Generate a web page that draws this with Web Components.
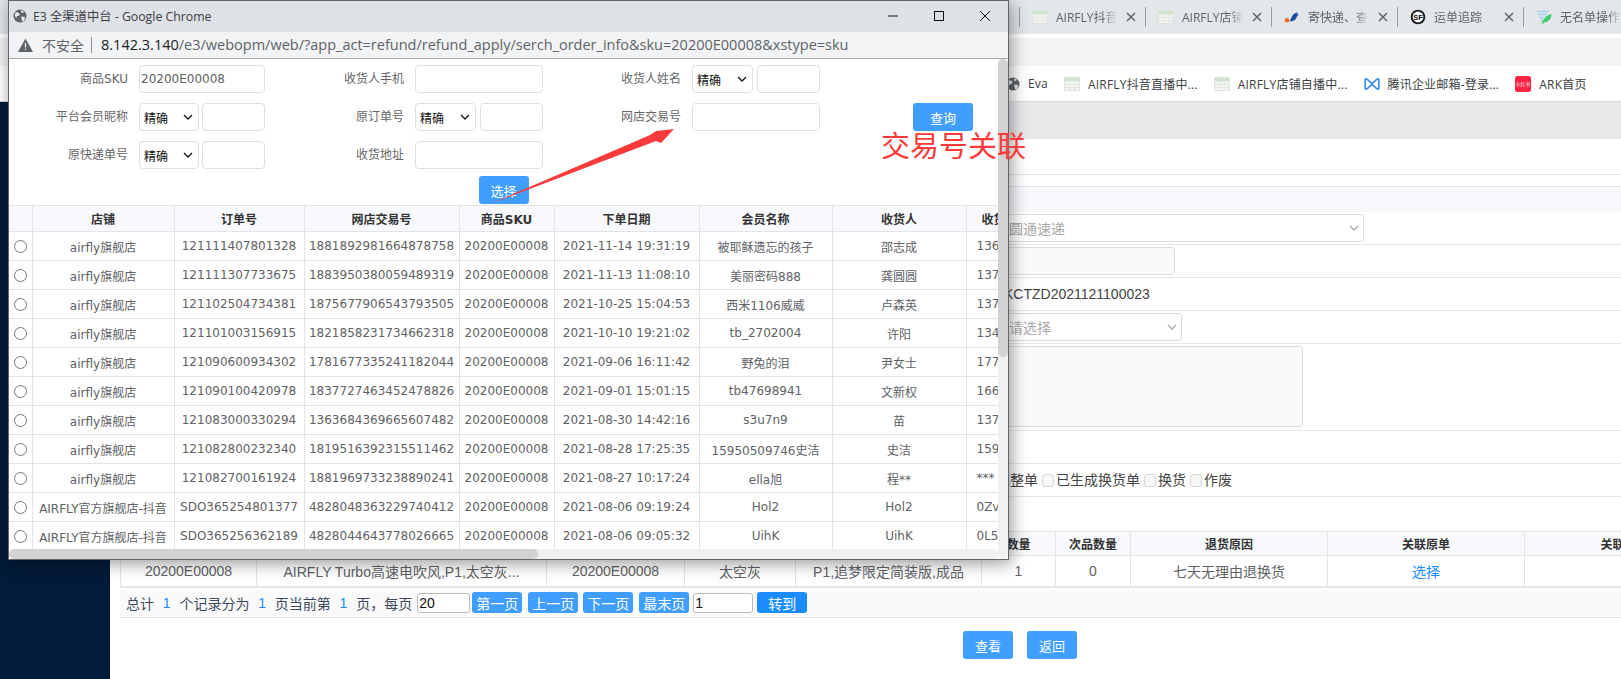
<!DOCTYPE html>
<html lang="zh-CN">
<head>
<meta charset="utf-8">
<title>E3 全渠道中台</title>
<style>
html,body{margin:0;padding:0;width:1621px;height:679px;overflow:hidden;background:#fff;font-family:"Liberation Sans","Noto Sans CJK SC",sans-serif}
</style>
</head>
<body>
<desk-app></desk-app>
<script>
const CJK='"Noto Sans CJK SC"';
function def(name,css,html,init){
  customElements.define(name,class extends HTMLElement{
    constructor(){super();const r=this.attachShadow({mode:'open'});
      r.innerHTML='<style>'+css+'</style>'+(typeof html==='function'?'':html);}
    connectedCallback(){
      if(typeof html==='function'){const r=this.shadowRoot;const st=r.querySelector('style').outerHTML;r.innerHTML=st+html(this);}
      if(init)init.call(this,this.shadowRoot);
    }
  });
}
const ICON={
 sheet:'<svg width="16" height="16" viewBox="0 0 16 16"><rect x=".5" y="1.5" width="15" height="13" fill="#f4f6f3" stroke="#dfe3dd"/><rect x="1" y="2" width="14" height="3.5" fill="#cfe3cf"/><path d="M1 8.5h14M1 11.5h14M6 5.5v9M11 5.5v9" stroke="#e3e6e1" fill="none"/></svg>',
 globe:'<svg width="14" height="14" viewBox="0 0 14 14"><circle cx="7" cy="7" r="6.5" fill="#5f6368"/><path d="M2.5 3.2l2.6.4 1.7 1.5-.9 1.7-1.9.3-.6 2-1.6-2.3zM8 1.4l2.7.8-.4 1.6-1.9.3zM8.4 7.4l2.8.3 1 1.2-1.6 3-1.5.2-.7-2.7z" fill="#e8eaed"/></svg>',
 bird:'<svg width="16" height="16" viewBox="0 0 16 16"><path d="M4.5 12.5C7 12 7 7.5 9.6 5.2 10.6 4.3 12.300 3.500 14 3.200l-1.300 2 2.300-.2-2 2.200c-.7 2.600-2.200 4.400-4.500 4.800-1.500.3-3 .600-4.500.500z" fill="#1d4f9c"/><circle cx="2.900" cy="11.200" r="2.300" fill="#f26b1d"/></svg>',
 sf:'<svg width="16" height="16" viewBox="0 0 16 16"><circle cx="8" cy="8" r="7.300" fill="#1b1b1b"/><circle cx="8" cy="8" r="5.400" fill="#fff"/><text x="8" y="10.700" text-anchor="middle" font-family="Liberation Sans" font-weight="700" font-size="7.500" fill="#111">SF</text></svg>',
 note:'<svg width="16" height="16" viewBox="0 0 16 16"><path d="M1 2.500h12M2 5.500h9M3 8.500h5M4 11.500h3" stroke="#a9d2ec" stroke-width="1.500" fill="none"/><path d="M5.500 15.500C7 10 10 6.500 15.500 5c0 4.500-2.500 7.800-7 8.200z" fill="#3ecb6c"/></svg>',
 mail:'<svg width="16" height="16" viewBox="0 0 16 16"><path d="M1.200 3.200v9.600h1.800L8 8.400 13 12.800h1.800V3.200H13L8 7.600 3 3.200z" fill="none" stroke="#3d8fe8" stroke-width="1.700" stroke-linejoin="round"/></svg>',
 ark:'<svg width="16" height="16" viewBox="0 0 16 16"><rect width="16" height="16" rx="2.500" fill="#ff2442"/><text x="8" y="10" text-anchor="middle" font-family="Noto Sans CJK SC" font-size="4.800" fill="#fff">小红书</text></svg>',
 chev:'<svg width="10" height="6" viewBox="0 0 10 6"><path d="M1 1l4 4 4-4" fill="none" stroke="currentColor" stroke-width="1.300"/></svg>'
};

def('ui-btn',`:host{display:inline-flex;align-items:center;justify-content:center;background:var(--btn,#409eff);color:#fff;border-radius:3px;font:var(--bfs,13px) ${CJK},sans-serif;box-sizing:border-box;width:var(--w,50px);height:var(--h,28px);flex:none}`,'<slot></slot>');

def('ui-input',`:host{display:block;box-sizing:border-box;border:1px solid #dcdfe6;border-radius:4px;height:28px;background:#fff;font:12px "DejaVu Sans",${CJK},sans-serif;color:#606266;line-height:26px;padding-left:1px;flex:1 1 auto;min-width:0}`,'<slot></slot>');

def('ui-select',`:host{display:flex;align-items:center;justify-content:space-between;box-sizing:border-box;border:1px solid #dcdfe6;border-radius:4px;height:28px;background:#fff;font:12px ${CJK},sans-serif;color:#111;padding:0 5px 0 4px;flex:none}`,'<slot></slot>'+ICON.chev);

def('ctl-pair',`:host{display:flex;gap:var(--g,3px);align-items:stretch}ui-select{width:var(--sw,60px)}`,
  '<ui-select>精确</ui-select><ui-input></ui-input>');

def('form-label',`:host{display:block;text-align:right;font:12px "DejaVu Sans",${CJK},sans-serif;color:#666;line-height:28px;white-space:nowrap;padding-right:1px}`,'<slot></slot>');

def('search-form',`:host{display:block;padding-top:6px}
 .g{display:grid;grid-template-columns:120px 126px 130px 128px 129px 128px 60px;grid-auto-rows:28px;column-gap:10px;row-gap:10px}
 .q{margin-left:83px}
 .w{--g:4px;--sw:61px}
 .act{display:flex;justify-content:center;margin-top:7px;padding-bottom:1px}`,
 `<div class="g">
 <form-label>商品SKU</form-label><ui-input>20200E00008</ui-input>
 <form-label>收货人手机</form-label><ui-input></ui-input>
 <form-label>收货人姓名</form-label><ctl-pair class="w"></ctl-pair><span></span>
 <form-label>平台会员昵称</form-label><ctl-pair></ctl-pair>
 <form-label>原订单号</form-label><ctl-pair class="w"></ctl-pair>
 <form-label>网店交易号</form-label><ui-input></ui-input><ui-btn class="q" style="--w:60px">查询</ui-btn>
 <form-label>原快递单号</form-label><ctl-pair></ctl-pair>
 <form-label>收货地址</form-label><ui-input></ui-input>
 </div>
 <div class="act"><ui-btn>选择</ui-btn></div>`);

const ORDERS=[
['airfly旗舰店','121111407801328','1881892981664878758','2021-11-14 19:31:19','被耶稣遗忘的孩子','邵志成','136'],
['airfly旗舰店','121111307733675','1883950380059489319','2021-11-13 11:08:10','美丽密码888','龚圆圆','137'],
['airfly旗舰店','121102504734381','1875677906543793505','2021-10-25 15:04:53','西米1106威威','卢森英','137'],
['airfly旗舰店','121101003156915','1821858231734662318','2021-10-10 19:21:02','tb_2702004','许阳','134'],
['airfly旗舰店','121090600934302','1781677335241182044','2021-09-06 16:11:42','野兔的泪','尹女士','177'],
['airfly旗舰店','121090100420978','1837727463452478826','2021-09-01 15:01:15','tb47698941','文新权','166'],
['airfly旗舰店','121083000330294','1363684369665607482','2021-08-30 14:42:16','s3u7n9','苗','137'],
['airfly旗舰店','121082800232340','1819516392315511462','2021-08-28 17:25:35','15950509746史洁','史洁','159'],
['airfly旗舰店','121082700161924','1881969733238890241','2021-08-27 10:17:24','ella旭','程**','***'],
['AIRFLY官方旗舰店-抖音','SDO365254801377','4828048363229740412','2021-08-06 09:19:24','Hol2','Hol2','0Zv'],
['AIRFLY官方旗舰店-抖音','SDO365256362189','4828044643778026665','2021-08-06 09:05:32','UihK','UihK','0L5']];

def('order-table',`:host{display:block;width:1098px}
 table{border-collapse:collapse;table-layout:fixed;width:1062px;font:12px "DejaVu Sans",${CJK},sans-serif;color:#606266}
 th,td{border:1px solid #e4e4e4;text-align:center;white-space:nowrap;overflow:hidden;padding:0;box-sizing:border-box}
 th{height:26px;background:#f7f9fc;color:#333;font-weight:700}
 td{height:29px}
 td:first-child,th:first-child{border-left:0}
 input{margin:3px 0 0 0;width:13px;height:13px;accent-color:#777}
 .l{text-align:left;padding-left:10px}
 th.l{padding-left:15px}`,
 ()=>`<table><colgroup><col style="width:23px"><col style="width:142px"><col style="width:130px"><col style="width:155px"><col style="width:95px"><col style="width:145px"><col style="width:133px"><col style="width:134px"><col style="width:105px"></colgroup>
 <tr><th></th><th>店铺</th><th>订单号</th><th>网店交易号</th><th>商品SKU</th><th>下单日期</th><th>会员名称</th><th>收货人</th><th class="l">收货人手机</th></tr>
 ${ORDERS.map(o=>`<tr><td><input type="radio" name="o"></td><td>${o[0]}</td><td>${o[1]}</td><td>${o[2]}</td><td>20200E00008</td><td>${o[3]}</td><td>${o[4]}</td><td>${o[5]}</td><td class="l">${o[6]}</td></tr>`).join('')}
 </table>`);

def('win-scrollbar',`:host{display:block;background:#f1f1f1;flex:none;border-radius:5px}
 i{display:block;background:#d2d2d2;border-radius:5px}
 :host([dir-h]) {height:10px}
 :host([dir-h]) i{height:10px;width:529px}
 :host([dir-v]) {width:10px}
 :host([dir-v]) i{width:10px;height:298px}`,'<i></i>');

def('popup-window',`:host{position:absolute;left:8px;top:0;width:1001px;height:560px;box-sizing:border-box;border:1px solid #62666b;background:#fff;box-shadow:2px 3px 16px rgba(0,0,0,.42);display:flex;flex-direction:column;z-index:2}
 .tb{height:31px;flex:none;background:#dee1e6;display:flex;align-items:center;box-sizing:border-box;font:12.300px "Open Sans",${CJK},sans-serif;color:#3c4043;padding:0 0 2px 4px}
 .tb .t{margin-left:6px;flex:1}
 .wc{display:flex;align-items:center}
 .wc svg{display:block;width:46px;height:16px}
 .ab{height:27px;flex:none;box-sizing:border-box;background:#f1f3f4;border-bottom:1px solid #a9abae;display:flex;align-items:center;padding:0 0 1px 9px;font:14px "Open Sans",${CJK},sans-serif;color:#5f6368}
 .ab .w{margin-left:9px}
 .ab .s{width:1px;height:16px;background:#8f9398;margin:0 9px 0 7px}
 .ab .u{font-size:14.500px;white-space:nowrap}
 .ab b{font-weight:400;color:#202124}
 .bd{flex:1;min-height:0;display:flex}
 .main{flex:1;min-width:0;display:flex;flex-direction:column}
 .vp{flex:1;min-height:0;overflow:hidden}`,
 `<div class="tb">${ICON.globe}<span class="t">E3 全渠道中台 - Google Chrome</span>
   <div class="wc">
    <svg viewBox="0 0 46 16"><path d="M18 8h10" stroke="#111" fill="none"/></svg>
    <svg viewBox="0 0 46 16"><rect x="18.500" y="3.500" width="9" height="9" stroke="#111" fill="none"/></svg>
    <svg viewBox="0 0 46 16"><path d="M18 3l10 10M28 3L18 13" stroke="#111" fill="none"/></svg>
   </div></div>
  <div class="ab"><svg width="15" height="14" viewBox="0 0 15 14"><path d="M7.500 .500L15 14H0z" fill="#5f6368"/><path d="M7.500 5v4.500M7.500 10.700v1.300" stroke="#f1f3f4" stroke-width="1.300"/></svg><span class="w">不安全</span><span class="s"></span><span class="u"><b>8.142.3.140</b>/e3/webopm/web/?app_act=refund/refund_apply/serch_order_info&amp;sku=20200E00008&amp;xstype=sku</span></div>
  <div class="bd"><div class="main"><div class="vp"><search-form></search-form><order-table></order-table></div><win-scrollbar dir-h></win-scrollbar></div><win-scrollbar dir-v></win-scrollbar></div>`);

def('tab-item',`:host{display:flex;align-items:center;box-sizing:border-box;width:126px;height:20px;flex:none;border-right:1px solid #9a9da1;padding-left:12px;position:relative;font:12px "Open Sans",${CJK},sans-serif;color:#5f6368}
 .i{width:16px;height:16px;flex:none}
 .x{flex:1;margin-left:8px;min-width:0;overflow:hidden;white-space:nowrap;-webkit-mask-image:linear-gradient(90deg,#000 78%,transparent);mask-image:linear-gradient(90deg,#000 78%,transparent)}
 svg.c{flex:none;margin:0 9px 0 9px}`,
 t=>`<span class="i">${ICON[t.getAttribute('icon')]||''}</span><span class="x"><slot></slot></span><svg class="c" width="10" height="10" viewBox="0 0 10 10"><path d="M1 1l8 8M9 1L1 9" stroke="#5f6368" stroke-width="1.500"/></svg>`);

def('book-mark',`:host{display:flex;align-items:center;gap:8px;font:12px "Open Sans",${CJK},sans-serif;letter-spacing:.2px;color:#3c4043;white-space:nowrap;flex:none}
 svg{display:block}`,
 t=>`${ICON[t.getAttribute('icon')]||''}<span><slot></slot></span>`);

def('browser-chrome',`:host{display:block;flex:none}
 .tabs{height:34px;background:#e4e7ea;display:flex;align-items:center;padding-left:894px;overflow:hidden;box-sizing:border-box}
 .gap{height:4px;background:#fff}
 .tool{height:28px;background:#f1f3f4}
 .books{height:36px;box-sizing:border-box;background:#fff;border-bottom:1px solid #dadce0;display:flex;align-items:center;gap:16px;padding-left:1006px;overflow:hidden}`,
 `<div class="tabs">
   <tab-item></tab-item>
   <tab-item icon="sheet">AIRFLY抖音直播中台</tab-item>
   <tab-item icon="sheet">AIRFLY店铺自播中台</tab-item>
   <tab-item icon="bird">寄快递、查快递</tab-item>
   <tab-item icon="sf">运单追踪</tab-item>
   <tab-item icon="note">无名单操作</tab-item>
  </div>
  <div class="gap"></div><div class="tool"></div>
  <div class="books">
   <book-mark icon="globe">Eva</book-mark>
   <book-mark icon="sheet">AIRFLY抖音直播中...</book-mark>
   <book-mark icon="sheet">AIRFLY店铺自播中...</book-mark>
   <book-mark icon="mail">腾讯企业邮箱-登录...</book-mark>
   <book-mark icon="ark">ARK首页</book-mark>
  </div>`);

def('pg-row',`:host{display:flex;align-items:flex-start;box-sizing:border-box;height:33px;border-bottom:1px solid #e6e6e6;padding:2px 0 0 891px;font:14px "Liberation Sans",${CJK},sans-serif;color:#444}`,'<slot></slot>');

def('pg-select',`:host{display:flex;align-items:center;justify-content:space-between;box-sizing:border-box;height:28px;background:#fff;border:1px solid #dcdcdc;border-radius:3px;font:14px ${CJK},sans-serif;color:#aaa;padding:0 4px 0 7px}`,'<slot></slot>'+ICON.chev);

def('pager-bar',`:host{display:flex;align-items:center;box-sizing:border-box;height:31px;margin:0 0 0 10px;padding-left:6px;background:#fafafa;border-top:1px solid #e8e8e8;border-bottom:1px solid #e4e4e4;font:14px ${CJK},sans-serif;color:#3c4a5c;white-space:nowrap}
 .n{color:#1a8cff;margin:0 8.800px;font-family:"Liberation Sans",sans-serif}
 .in{box-sizing:border-box;height:20px;background:#fff;border:1px solid #bbb;border-radius:3px;font:14px/18px "Liberation Sans",sans-serif;color:#111;padding-left:1px;flex:none}
 ui-btn{--h:21px;--bfs:14px}`,
 `<span>总计</span><span class="n">1</span><span>个记录分为</span><span class="n">1</span><span>页当前第</span><span class="n">1</span><span>页，每页</span>
  <span class="in" style="width:53px;margin:0 2px 0 5px">20</span>
  <ui-btn>第一页</ui-btn><ui-btn style="margin-left:6px">上一页</ui-btn><ui-btn style="margin-left:5px">下一页</ui-btn><ui-btn style="margin-left:6px">最末页</ui-btn>
  <span class="in" style="width:60px;margin:0 4px">1</span>
  <ui-btn style="--btn:#1a8cff">转到</ui-btn>`);

def('detail-table',`:host{display:block;margin-left:10px;overflow:hidden}
 table{border-collapse:collapse;table-layout:fixed;width:1604px;font:14px "Liberation Sans",${CJK},sans-serif;color:#606266}
 th,td{border:1px solid #e4e4e4;text-align:center;white-space:nowrap;overflow:hidden;padding:0;box-sizing:border-box}
 th{height:24px;background:#f7f9fc;color:#333;font:700 12px ${CJK},sans-serif}
 td{height:31px}
 a{color:#1a8cff;text-decoration:none}`,
 `<table><colgroup><col style="width:136px"><col style="width:290px"><col style="width:138px"><col style="width:111px"><col style="width:186px"><col style="width:74px"><col style="width:75px"><col style="width:197px"><col style="width:197px"><col style="width:200px"></colgroup>
 <tr><th></th><th></th><th></th><th></th><th></th><th>数量</th><th>次品数量</th><th>退货原因</th><th>关联原单</th><th>关联单号</th></tr>
 <tr><td>20200E00008</td><td>AIRFLY Turbo高速电吹风,P1,太空灰...</td><td>20200E00008</td><td>太空灰</td><td>P1,追梦限定简装版,成品</td><td>1</td><td>0</td><td>七天无理由退换货</td><td><a>选择</a></td><td></td></tr></table>`);

def('refund-page',`:host{flex:1;min-height:0;display:flex}
 .side{width:110px;flex:none;background:#031b38}
 .c{flex:1;min-width:0;overflow:hidden;background:#fff}
 .band{height:37px;background:#e7e8ea}
 .b1{height:36px;box-sizing:border-box;border-bottom:1px solid #e2e2e2}
 .b2{height:12px;box-sizing:border-box;border-bottom:1px solid #e2e2e2}
 .b3{height:25px;background:#f7f9fc}
 .tx{line-height:28px;margin-left:3px}
 .dis{box-sizing:border-box;height:28px;width:174px;background:#fafafa;border:1px solid #dcdcdc;border-radius:3px}
 .ta{box-sizing:border-box;height:81px;width:302px;background:#fafafa;border:1px solid #dcdcdc;border-radius:3px}
 .ck{display:flex;align-items:center;line-height:28px;margin-left:-5px}
 .ck i{display:block;box-sizing:border-box;width:12px;height:13px;border:1px solid #d8d8d8;border-radius:3px;background:#f6f6f6;margin:0 2px 0 4px}
 .sp{height:34px}
 .act{display:flex;gap:14px;padding:13px 0 0 853px}`,
 `<div class="side"></div><div class="c">
   <div class="band"></div><div class="b1"></div><div class="b2"></div><div class="b3"></div>
   <pg-row><pg-select style="width:363px">圆通速递</pg-select></pg-row>
   <pg-row><div class="dis"></div></pg-row>
   <pg-row><span class="tx">KCTZD2021121100023</span></pg-row>
   <pg-row><pg-select style="width:181px">请选择</pg-select></pg-row>
   <pg-row style="height:87px"><div class="ta"></div></pg-row>
   <pg-row></pg-row>
   <pg-row><div class="ck"><span>调整单</span><i></i><span>已生成换货单</span><i></i><span>换货</span><i></i><span>作废</span></div></pg-row>
   <div class="sp"></div>
   <detail-table></detail-table>
   <pager-bar></pager-bar>
   <div class="act"><ui-btn>查看</ui-btn><ui-btn>返回</ui-btn></div>
 </div>`);

def('note-mark',`:host{position:absolute;left:0;top:0;width:0;height:0;z-index:3}
 svg{position:absolute;left:0;top:0}
 span{position:absolute;left:881px;top:123px;font:29px/42px ${CJK},sans-serif;color:#fb3b3b;white-space:nowrap}`,
 `<svg width="700" height="220" viewBox="0 0 700 220"><polygon points="490,204 650,135 656,131 674,129 661,143 656,141" fill="#fb3b3b"/></svg><span>交易号关联</span>`);

def('desk-app',`:host{display:flex;flex-direction:column;position:relative;width:1621px;height:679px;overflow:hidden}`,
 `<browser-chrome></browser-chrome><refund-page></refund-page><popup-window></popup-window><note-mark></note-mark>`);
</script>
</body>
</html>
